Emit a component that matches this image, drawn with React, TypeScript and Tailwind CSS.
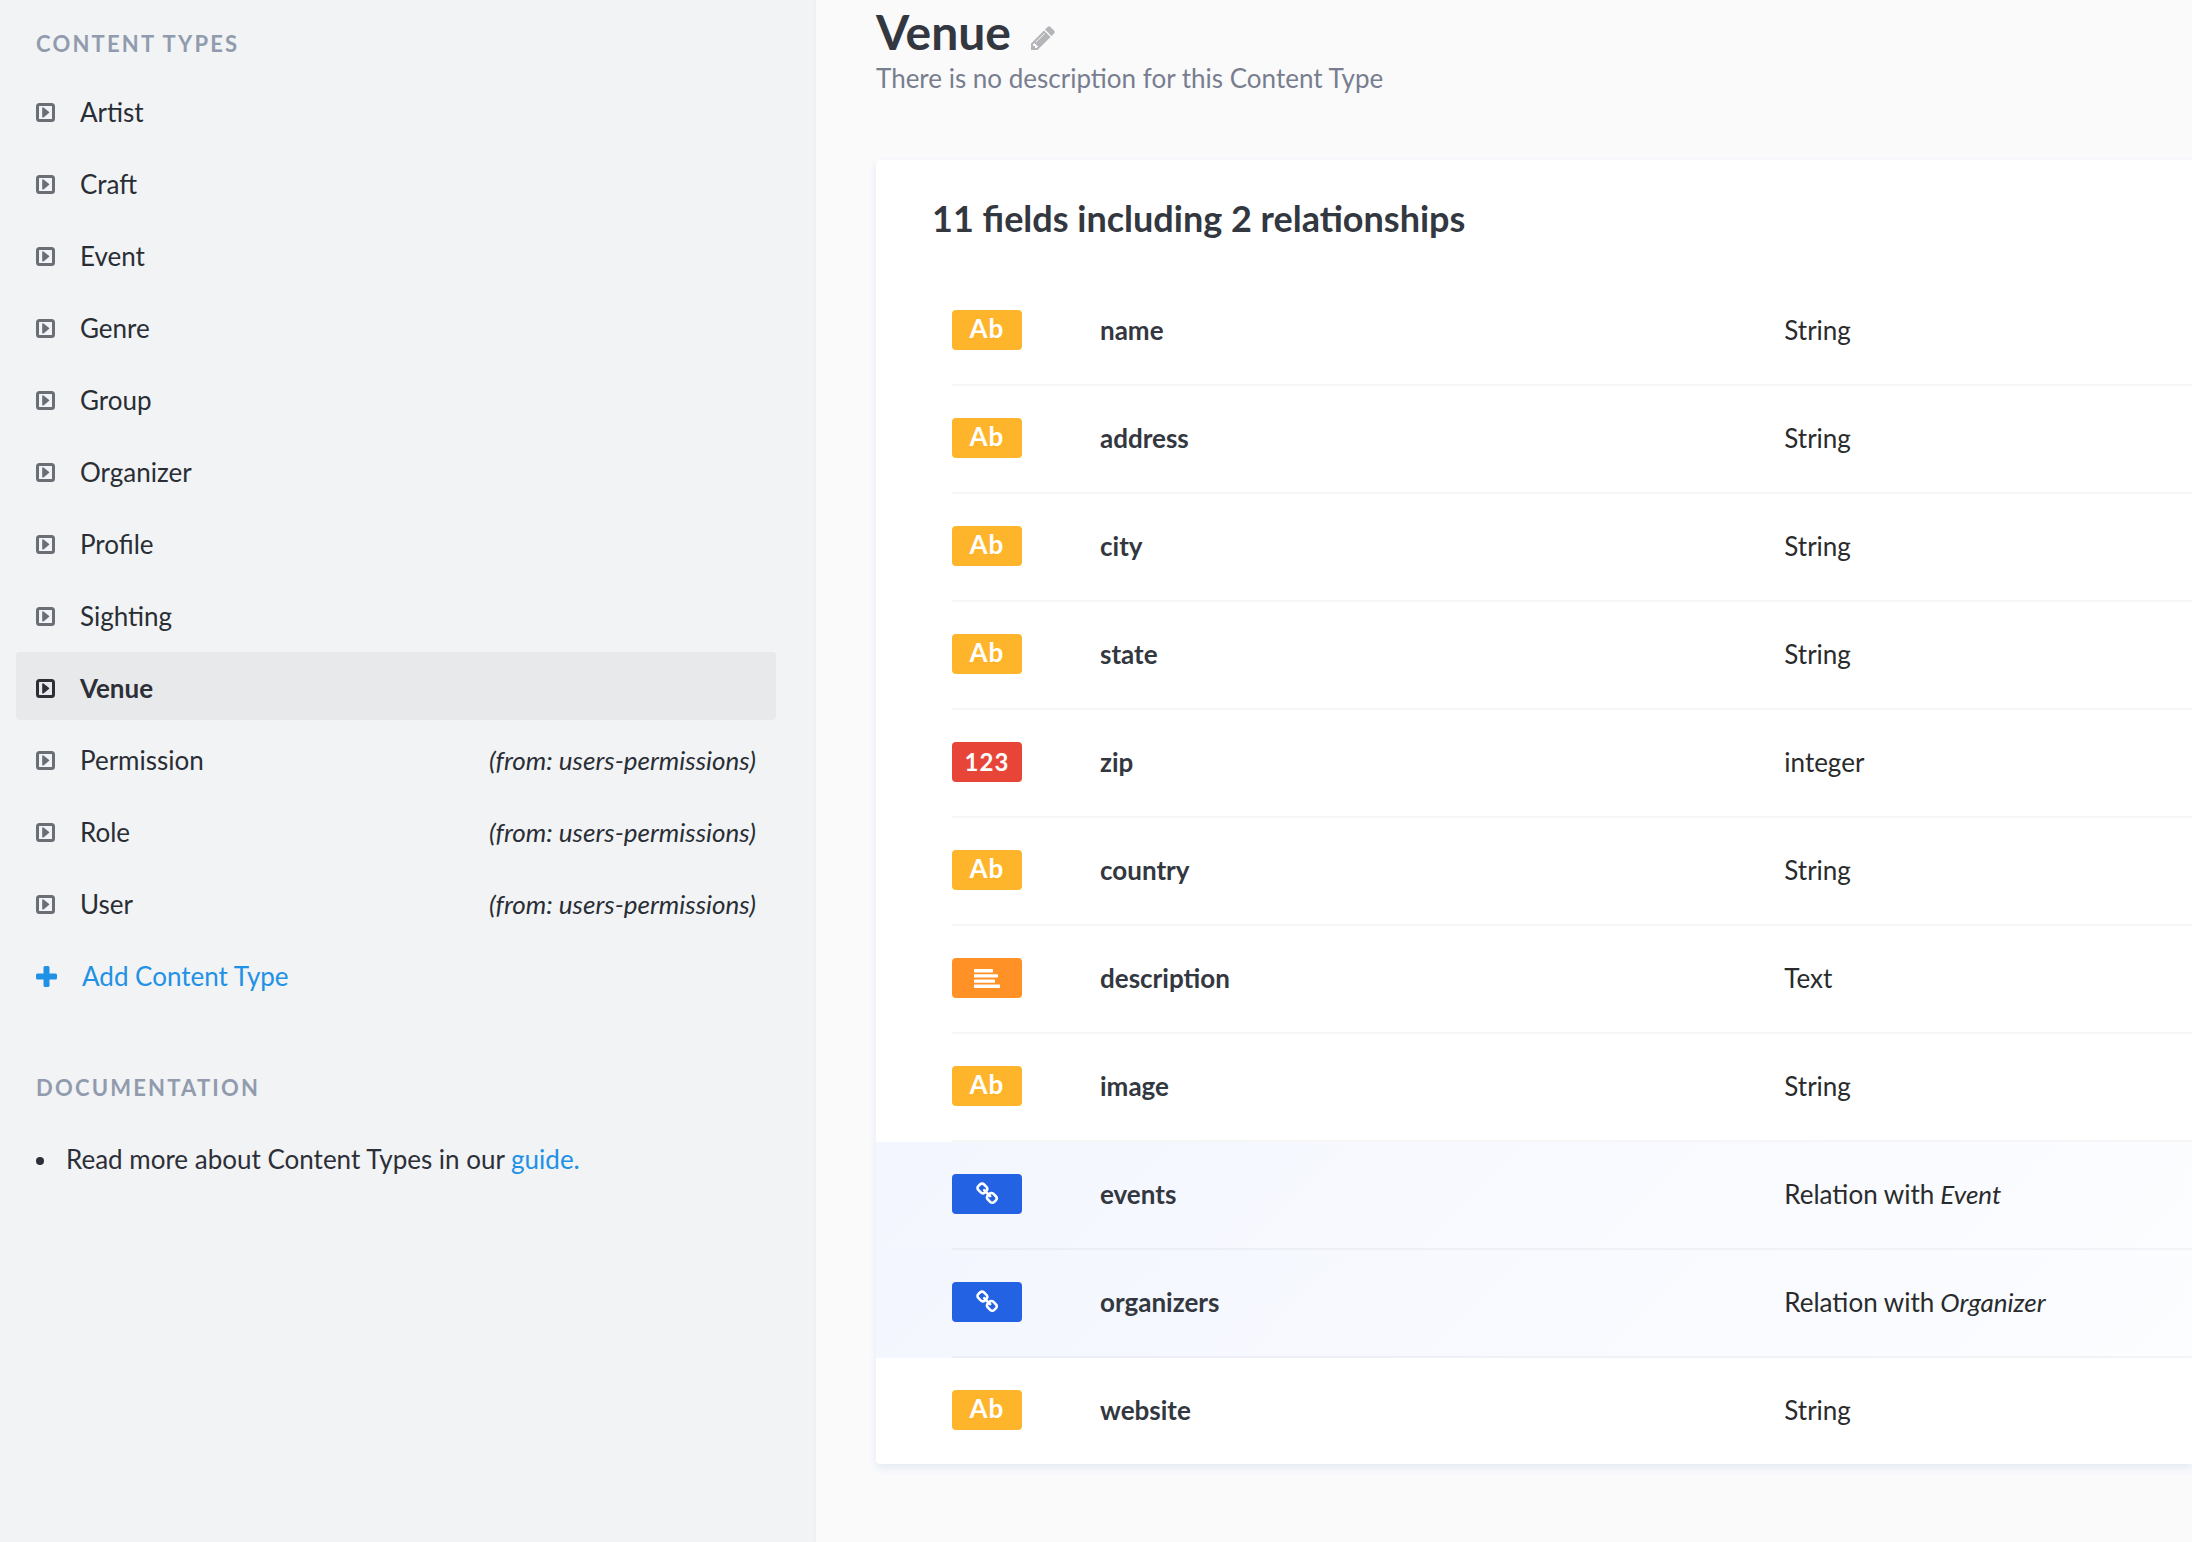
type ContentType = { name: string; source?: string };
type FieldKind = "string" | "number" | "text" | "relation";
type Field = { name: string; kind: FieldKind; type: string; target?: string };

const contentTypes: ContentType[] = [
  { name: "Artist" },
  { name: "Craft" },
  { name: "Event" },
  { name: "Genre" },
  { name: "Group" },
  { name: "Organizer" },
  { name: "Profile" },
  { name: "Sighting" },
  { name: "Venue" },
  { name: "Permission", source: "users-permissions" },
  { name: "Role", source: "users-permissions" },
  { name: "User", source: "users-permissions" },
];

const fields: Field[] = [
  { name: "name", kind: "string", type: "String" },
  { name: "address", kind: "string", type: "String" },
  { name: "city", kind: "string", type: "String" },
  { name: "state", kind: "string", type: "String" },
  { name: "zip", kind: "number", type: "integer" },
  { name: "country", kind: "string", type: "String" },
  { name: "description", kind: "text", type: "Text" },
  { name: "image", kind: "string", type: "String" },
  { name: "events", kind: "relation", type: "Relation with", target: "Event" },
  { name: "organizers", kind: "relation", type: "Relation with", target: "Organizer" },
  { name: "website", kind: "string", type: "String" },
];

function CaretSquareIcon() {
  return (
    <svg viewBox="0 0 19 19" className="size-[19px] shrink-0" aria-hidden="true">
      <rect x="1.5" y="1.5" width="16" height="16" rx="2" fill="none" stroke="currentColor" strokeWidth="3" />
      <path d="M6.2 5.1c0-.8.7-1.1 1.3-.7l5.4 4.3c.5.4.5 1 0 1.4l-5.4 4.3c-.6.4-1.3.1-1.3-.7z" fill="currentColor" />
    </svg>
  );
}

function PlusIcon() {
  return (
    <svg viewBox="0 0 21 21" className="size-[21px] shrink-0" aria-hidden="true" fill="currentColor">
      <path d="M9 0h3a1.5 1.5 0 0 1 1.5 1.5v6h6A1.5 1.5 0 0 1 21 9v3a1.5 1.5 0 0 1-1.5 1.5h-6v6A1.5 1.5 0 0 1 12 21H9a1.5 1.5 0 0 1-1.5-1.5v-6h-6A1.5 1.5 0 0 1 0 12V9a1.5 1.5 0 0 1 1.5-1.5h6v-6A1.5 1.5 0 0 1 9 0z" />
    </svg>
  );
}

function PencilIcon() {
  return (
    <svg viewBox="0 0 1792 1792" className="size-7" aria-hidden="true" fill="currentColor">
      <path d="M491 1536l91-91-235-235-91 91v107h128v128h107zm523-928q0-22-22-22-10 0-17 7l-542 542q-7 7-7 17 0 22 22 22 10 0 17-7l542-542q7-7 7-17zm-54-192l416 416-832 832h-416v-416zm683 96q0 53-37 90l-166 166-416-416 166-165q36-38 90-38 53 0 91 38l235 234q37 39 37 91z" />
    </svg>
  );
}

function AlignLeftIcon() {
  return (
    <svg viewBox="0 0 26 19" className="h-[19px] w-[26px]" aria-hidden="true" fill="currentColor">
      <rect x="0" y="0" width="19" height="3.4" rx="0.6" />
      <rect x="0" y="5.2" width="24" height="3.4" rx="0.6" />
      <rect x="0" y="10.4" width="21" height="3.4" rx="0.6" />
      <rect x="0" y="15.6" width="26" height="3.4" rx="0.6" />
    </svg>
  );
}

function LinkIcon() {
  return (
    <svg viewBox="0 0 1792 1792" className="size-6" aria-hidden="true" fill="currentColor">
      <path d="M1456 1216q0-40-28-68l-208-208q-28-28-68-28-42 0-72 32 3 3 19 18.5t21.5 21.5 15 19 13 25.5 3.5 27.5q0 40-28 68t-68 28q-15 0-27.5-3.5t-25.5-13-19-15-21.5-21.5-18.5-19q-33 31-33 73 0 40 28 68l206 207q27 27 68 27 40 0 68-26l147-146q28-28 28-67zm-703-705q0-40-28-68l-206-207q-28-28-68-28-39 0-68 27l-147 146q-28 28-28 67 0 40 28 68l208 208q27 27 68 27 42 0 72-31-3-3-19-18.5t-21.5-21.5-15-19-13-25.5-3.5-27.5q0-40 28-68t68-28q15 0 27.5 3.5t25.5 13 19 15 21.5 21.5 18.5 19q33-31 33-73zm895 705q0 120-85 203l-147 146q-83 83-203 83-121 0-204-85l-206-207q-83-83-83-203 0-123 88-209l-88-88q-86 88-208 88-120 0-204-84l-208-208q-84-84-84-204t85-203l147-146q83-83 203-83 121 0 204 85l206 207q83 83 83 203 0 123-88 209l88 88q86-88 208-88 120 0 204 84l208 208q84 84 84 204z" />
    </svg>
  );
}

const badgeBase = "flex h-10 w-[70px] items-center justify-center rounded font-bold text-white";

function KindBadge({ kind }: { kind: FieldKind }) {
  if (kind === "number") {
    return <span className={`${badgeBase} bg-[#e74538] text-2xl tracking-[1px]`}>123</span>;
  }
  if (kind === "text") {
    return (
      <span className={`${badgeBase} bg-[#ff9126]`}>
        <AlignLeftIcon />
      </span>
    );
  }
  if (kind === "relation") {
    return (
      <span className={`${badgeBase} bg-[#2362e3] pl-0.5`}>
        <LinkIcon />
      </span>
    );
  }
  return <span className={`${badgeBase} bg-[#feb42b] pb-1 tracking-[1px]`}>Ab</span>;
}

function Sidebar() {
  return (
    <aside className="w-[816px] shrink-0 border-r-2 border-[#eff0f1] bg-[#f2f3f5] pr-[38px] pl-4">
      <h2 className="pt-7 pl-5 text-[22px] leading-8 font-bold tracking-widest text-[#919bae] uppercase">
        Content Types
      </h2>
      <nav aria-label="Content types" className="mt-4">
        <ul className="flex flex-col gap-1">
          {contentTypes.map((item) => {
            const active = item.name === "Venue";
            return (
              <li key={item.name}>
                <a
                  href={`#${item.name.toLowerCase()}`}
                  aria-current={active ? "page" : undefined}
                  className={
                    active
                      ? "flex h-[68px] items-center rounded bg-[#e8e9ea] px-5 pt-1 font-bold text-[#2d2f38]"
                      : "flex h-[68px] items-center rounded px-5 pt-1 text-[#292e35]"
                  }
                >
                  <span className={active ? "text-[#2d2f38]" : "text-[#6a6e77]"}>
                    <CaretSquareIcon />
                  </span>
                  <span className="ml-[25px]">{item.name}</span>
                  {item.source && <i className="ml-auto">(from: {item.source})</i>}
                </a>
              </li>
            );
          })}
          <li>
            <button type="button" className="flex h-[68px] w-full cursor-pointer items-center px-5 pt-1 text-[#2191e5]">
              <PlusIcon />
              <span className="ml-[25px]">Add Content Type</span>
            </button>
          </li>
        </ul>
      </nav>
      <h2 className="mt-16 pl-5 text-[22px] leading-8 font-bold tracking-widest text-[#919bae] uppercase">
        Documentation
      </h2>
      <ul className="mt-9 pl-5">
        <li className="flex items-center text-[#2d2f38]">
          <span className="mt-1 mr-[22px] size-2 rounded-full bg-current" />
          <span>
            Read more about Content Types in our{" "}
            <a href="#guide" className="text-[#2191e5]">
              guide.
            </a>
          </span>
        </li>
      </ul>
    </aside>
  );
}

function FieldsTable() {
  return (
    <table className="w-full table-fixed border-separate border-spacing-0">
      <colgroup>
        <col className="w-[76px]" />
        <col className="w-[148px]" />
        <col className="w-[52%]" />
        <col />
      </colgroup>
      <tbody className="[&>tr:last-child>*]:h-[106px] [&>tr:last-child>*]:border-b-0">
        {fields.map((field) => (
          <tr
            key={field.name}
            className={
              field.kind === "relation"
                ? "bg-linear-[135deg,#f3f6fe,#fcfdff] before:table-cell before:content-['']"
                : "before:table-cell before:content-['']"
            }
          >
            <td className="h-[108px] border-b-2 border-[#0e16220a] pb-0.5 align-middle">
              <KindBadge kind={field.kind} />
            </td>
            <th scope="row" className="h-[108px] border-b-2 border-[#0e16220a] pb-0.5 text-left align-middle font-bold text-[#333740]">
              {field.name}
            </th>
            <td className="h-[108px] border-b-2 border-[#0e16220a] pb-0.5 align-middle text-[#292b2c]">
              {field.type}
              {field.target && <i> {field.target}</i>}
            </td>
          </tr>
        ))}
      </tbody>
    </table>
  );
}

export default function App() {
  return (
    <div className="flex min-h-screen bg-[#fafafb] font-['Lato',sans-serif] text-[26px] leading-[38px]">
      <Sidebar />
      <main className="min-w-0 flex-1 overflow-hidden pt-[5px] pl-[60px]">
        <div className="flex items-center">
          <h1 className="text-5xl leading-[54px] font-bold text-[#333740]">Venue</h1>
          <button type="button" aria-label="Edit content type" className="mt-3 ml-[18px] cursor-pointer text-[#b3b5b9]">
            <PencilIcon />
          </button>
        </div>
        <p className="text-[#787e8f]">There is no description for this Content Type</p>
        <section className="mt-[63px] rounded-l bg-white shadow-[0_4px_8px_#e3e9f3]">
          <h2 className="pt-9 pb-[38px] pl-14 text-4xl leading-[44px] font-bold text-[#333740]">
            11 fields including 2 relationships
          </h2>
          <FieldsTable />
        </section>
      </main>
    </div>
  );
}
